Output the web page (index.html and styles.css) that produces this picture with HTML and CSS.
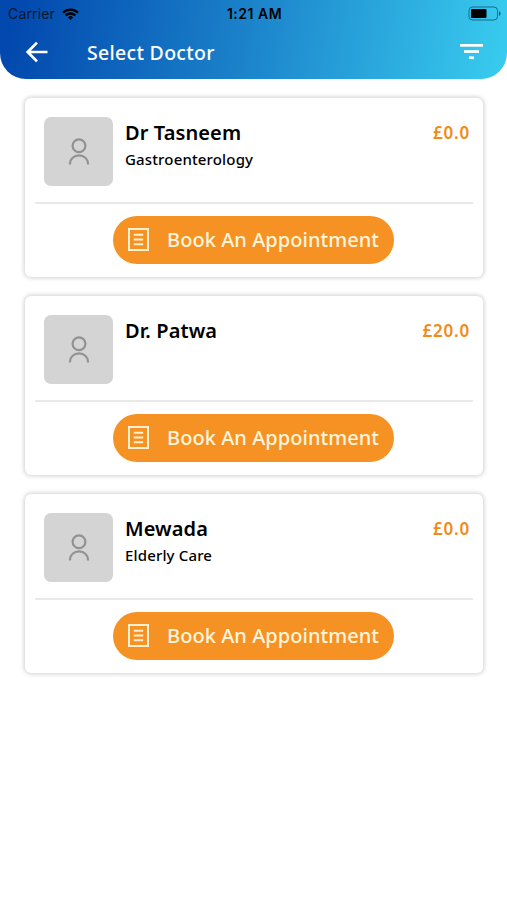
FILE: index.html
```html
<!DOCTYPE html>
<html lang="en">
<head>
    <meta charset="UTF-8">
    <meta name="viewport" content="width=device-width, initial-scale=1.0">
    <title>Select Doctor</title>
    <link rel="stylesheet" href="styles.css">
</head>
<body>
    <!-- shared icons -->
    <svg class="sprite" width="0" height="0">
        <symbol id="icon-user" viewBox="0 0 22 28">
            <circle cx="11" cy="7.8" r="6.4"/>
            <path d="M2 26.500v-1a9 8.200 0 0 1 18 0v1"/>
        </symbol>
        <symbol id="icon-form" viewBox="0 0 21 23">
            <path d="M1 1h19v21H1z"/>
            <path d="M5.800 6.800h9.400M5.800 11.500h9.400M5.800 16.200h9.400"/>
        </symbol>
    </svg>

    <header class="header">
        <div class="status-bar">
            <div class="carrier">
                <span class="carrier-name">Carrier</span>
                <svg class="wifi" width="17" height="12" viewBox="0 0 17 12" fill="none" stroke="#000" stroke-width="2.3">
                    <path d="M1 4.700a10.600 10.600 0 0 1 15 0M3.700 7.500a6.800 6.800 0 0 1 9.600 0"/>
                    <path d="M8.500 12L5.900 9.400a3.700 3.700 0 0 1 5.200 0z" fill="#000" stroke="none"/>
                </svg>
            </div>
            <span class="time">1:21 AM</span>
            <svg class="battery" width="33" height="15" viewBox="0 0 33 15">
                <rect x="1" y="1" width="28.500" height="13" rx="3.500" fill="none" stroke="#134f6a" stroke-opacity=".75"/>
                <rect x="3" y="3" width="15.500" height="9" rx="1" fill="#000"/>
                <path d="M31 5v5q1.500-1 1.500-2.500T31 5z" fill="#134f6a"/>
            </svg>
        </div>
        <div class="nav-bar">
            <svg class="back" width="22" height="22" viewBox="0 0 22 22" fill="none" stroke="#fff" stroke-width="2.700">
                <path d="M21.500 11H2M11 1.600L1.700 11l9.300 9.400"/>
            </svg>
            <h1 class="title">Select Doctor</h1>
            <svg class="filter" width="23" height="16" viewBox="0 0 23 16" fill="#fff">
                <rect width="23" height="2.700"/>
                <rect x="4" y="6.200" width="15" height="2.700"/>
                <rect x="9" y="12.400" width="5" height="2.700"/>
            </svg>
        </div>
    </header>

    <main class="doctor-list">
        <section class="card">
            <div class="doctor">
                <div class="avatar"><svg class="user-icon"><use href="#icon-user"/></svg></div>
                <div class="info">
                    <h2 class="name">Dr Tasneem</h2>
                    <p class="speciality">Gastroenterology</p>
                </div>
                <span class="price">£0.0</span>
            </div>
            <div class="actions">
                <button class="book-btn" type="button"><svg class="form-icon"><use href="#icon-form"/></svg><span>Book An Appointment</span></button>
            </div>
        </section>

        <section class="card">
            <div class="doctor">
                <div class="avatar"><svg class="user-icon"><use href="#icon-user"/></svg></div>
                <div class="info">
                    <h2 class="name">Dr. Patwa</h2>
                </div>
                <span class="price">£20.0</span>
            </div>
            <div class="actions">
                <button class="book-btn" type="button"><svg class="form-icon"><use href="#icon-form"/></svg><span>Book An Appointment</span></button>
            </div>
        </section>

        <section class="card">
            <div class="doctor">
                <div class="avatar"><svg class="user-icon"><use href="#icon-user"/></svg></div>
                <div class="info">
                    <h2 class="name">Mewada</h2>
                    <p class="speciality">Elderly Care</p>
                </div>
                <span class="price">£0.0</span>
            </div>
            <div class="actions">
                <button class="book-btn" type="button"><svg class="form-icon"><use href="#icon-form"/></svg><span>Book An Appointment</span></button>
            </div>
        </section>
    </main>
</body>
</html>
```
FILE: styles.css
```css
* {
    box-sizing: border-box;
}
body {
    margin: 0;
    min-height: 900px;
    background-color: #fff;
    font-family: "Noto Sans", sans-serif;
    color: #000;
}
h1, h2, p {
    margin: 0;
}
.sprite {
    display: block;
}
.header {
    height: 79px;
    border-radius: 0 0 26px 26px;
    background: linear-gradient(100deg, #0248ae 3%, #1b82ca 48%, #38caee 98%);
}
.status-bar {
    display: grid;
    grid-template-columns: 1fr auto 1fr;
    align-items: center;
    height: 27px;
    padding: 0 6px 0 8px;
    font-family: Inter, sans-serif;
    font-size: 14px;
    line-height: 27px;
}
.carrier {
    display: flex;
    align-items: center;
    gap: 7px;
    color: #08172f;
}
.carrier-name {
    letter-spacing: 0.15px;
}
.time {
    font-weight: 600;
    letter-spacing: 0.5px;
}
.battery {
    justify-self: end;
}
.nav-bar {
    display: flex;
    align-items: center;
    height: 50px;
    padding: 0 24px 0 26px;
}
.title {
    margin-left: 39px;
    color: #fff;
    font-size: 19.5px;
    font-weight: 500;
    letter-spacing: 0.3px;
}
.filter {
    margin-left: auto;
}
.doctor-list {
    display: flex;
    flex-direction: column;
    gap: 19px;
    padding: 19px 24px 0 25px;
}
.card {
    height: 179px;
    padding: 0 10px;
    background-color: #fff;
    border-radius: 6px;
    box-shadow: 0 0 4px 1px rgba(0, 0, 0, 0.19);
}
.doctor {
    display: flex;
    height: 106px;
    padding: 19px 3px 0 9px;
    border-bottom: 2px solid #e9e9e9;
}
.avatar {
    display: flex;
    align-items: center;
    justify-content: center;
    width: 69px;
    height: 69px;
    border-radius: 7px;
    background-color: #d4d4d4;
}
.user-icon {
    width: 22px;
    height: 28px;
    fill: none;
    stroke: #929292;
    stroke-width: 2.2;
}
.info {
    flex: 1;
    padding-left: 12px;
}
.name {
    font-size: 20px;
    font-weight: 600;
    letter-spacing: 0.1px;
    line-height: 31px;
}
.speciality {
    font-size: 15px;
    font-weight: 500;
    letter-spacing: 0.15px;
    line-height: 23px;
}
.price {
    color: #f18b18;
    font-size: 17px;
    font-weight: 600;
    letter-spacing: 0.8px;
    line-height: 31px;
}
.actions {
    display: flex;
    justify-content: center;
    padding: 12px 1px 0 0;
}
.book-btn {
    display: flex;
    align-items: center;
    gap: 18px;
    width: 281px;
    height: 48px;
    padding: 0 0 1px 15px;
    border: none;
    border-radius: 24px;
    background-color: #f69224;
    color: #fff5dc;
    font-family: inherit;
    font-size: 20px;
    font-weight: 500;
    letter-spacing: 0.05px;
    white-space: nowrap;
    cursor: pointer;
}
.form-icon {
    width: 21px;
    height: 23px;
    fill: none;
    stroke: #fff0cf;
    stroke-width: 2;
}
```
